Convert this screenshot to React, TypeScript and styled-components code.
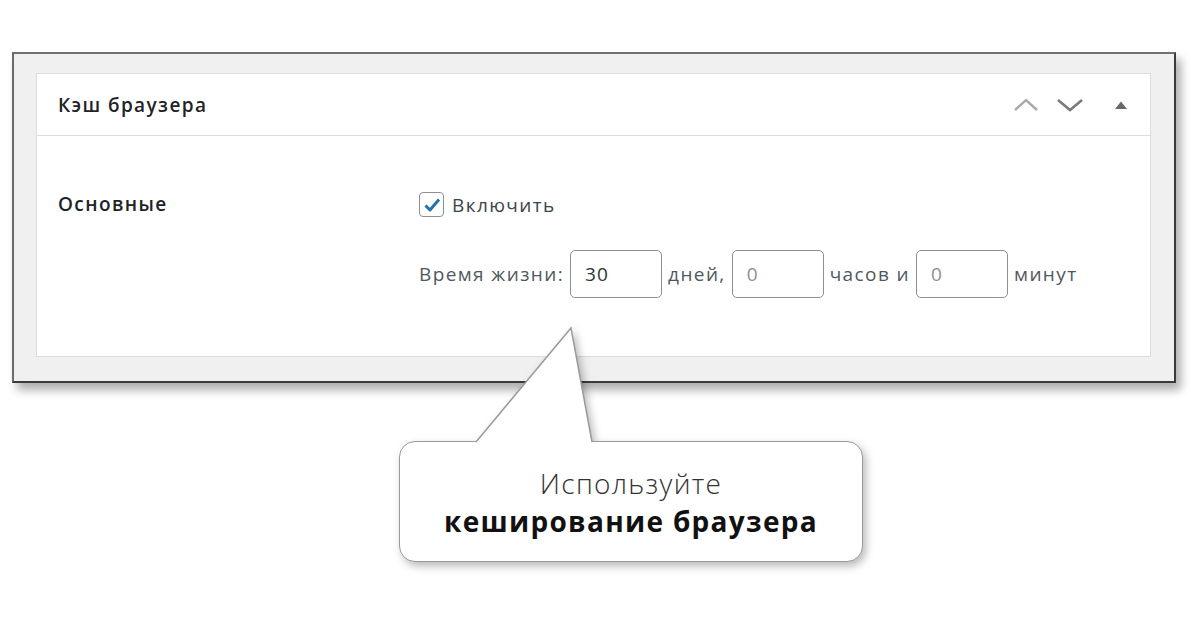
import styled, { createGlobalStyle } from "styled-components";

const GlobalStyle = createGlobalStyle`
  html, body {
    margin: 0;
    padding: 0;
    background: #ffffff;
    font-family: "Open Sans", "Noto Sans", sans-serif;
  }
`;

const Page = styled.div`
  position: relative;
  width: 1200px;
  height: 628px;
  padding: 52px 0 0 12px;
  box-sizing: border-box;
  overflow: hidden;
`;

const Frame = styled.div`
  width: 1164px;
  height: 331px;
  box-sizing: border-box;
  background: #f0f0f1;
  border: 2px solid #5a5a5a;
  border-top-color: #707070;
  border-left-color: #6a6a6a;
  border-right-color: #3a3a3a;
  border-bottom-color: #3a3a3a;
  box-shadow: 5px 7px 9px rgba(0, 0, 0, 0.32);
  padding: 19px 23px 24px 22px;
`;

const Panel = styled.div`
  height: 100%;
  box-sizing: border-box;
  background: #ffffff;
  border: 1px solid #dcdcde;
  display: flex;
  flex-direction: column;
  letter-spacing: 1.4px;
`;

const Header = styled.div`
  height: 62px;
  box-sizing: border-box;
  border-bottom: 1px solid #dcdcde;
  display: flex;
  align-items: center;
  padding: 0 9px 0 21px;
`;

const Title = styled.h2`
  margin: 0;
  font-size: 19px;
  font-weight: 600;
  color: #1d2327;
`;

const Controls = styled.div`
  margin-left: auto;
  display: flex;
  align-items: center;
  gap: 4px;
`;

const IconButton = styled.button<{ $spaced?: boolean }>`
  width: 40px;
  height: 36px;
  padding: 0;
  border: none;
  background: transparent;
  display: flex;
  align-items: center;
  justify-content: center;
  margin-left: ${(p) => (p.$spaced ? "7px" : "0")};
  cursor: pointer;
`;

const Body = styled.div`
  display: grid;
  grid-template-columns: 361px 1fr;
  padding: 56px 0 0 21px;
`;

const RowLabel = styled.div`
  font-size: 19px;
  font-weight: 600;
  color: #1d2327;
  line-height: 25px;
`;

const Fields = styled.div`
  display: flex;
  flex-direction: column;
  gap: 33px;
`;

const CheckRow = styled.label`
  display: flex;
  align-items: center;
  gap: 8px;
  height: 25px;
  font-size: 19px;
  color: #3c434a;
`;

const CheckBox = styled.span`
  width: 25px;
  height: 25px;
  box-sizing: border-box;
  border: 1.5px solid #8c8f94;
  border-radius: 4px;
  display: flex;
  align-items: center;
  justify-content: center;
  background: #fff;
`;

const TimeRow = styled.div`
  display: flex;
  align-items: center;
  gap: 6px;
  font-size: 19px;
  color: #50575e;
`;

const NumberInput = styled.input`
  width: 92px;
  height: 48px;
  box-sizing: border-box;
  border: 1.5px solid #8c8f94;
  border-radius: 5px;
  padding: 0 14px;
  font-family: inherit;
  font-size: 19px;
  letter-spacing: 1px;
  color: #2c3338;
  background: #fff;
  &::placeholder {
    color: #8c8f94;
  }
`;

const Callout = styled.div`
  position: absolute;
  left: 399px;
  top: 441px;
  width: 464px;
  height: 121px;
  filter: drop-shadow(3px 4px 4px rgba(0, 0, 0, 0.28));
`;

const Bubble = styled.div`
  width: 100%;
  height: 100%;
  box-sizing: border-box;
  background: #fff;
  border: 1.5px solid #9a9a9a;
  border-radius: 16px;
  display: flex;
  flex-direction: column;
  align-items: center;
  justify-content: center;
  text-align: center;
  line-height: 38px;
  font-size: 28px;
  letter-spacing: 1.3px;
  color: #333;
`;

const Light = styled.span`
  font-weight: 300;
`;

const Strong = styled.span`
  font-weight: 700;
  color: #111;
`;

const Pointer = styled.svg`
  position: absolute;
  left: 76px;
  top: -113px;
  overflow: visible;
`;

export default function App() {
  return (
    <>
      <GlobalStyle />
      <Page>
        <Frame>
          <Panel>
            <Header>
              <Title>Кэш браузера</Title>
              <Controls>
                <IconButton aria-label="Вверх">
                  <svg width="26" height="16" viewBox="0 0 26 16">
                    <path d="M2 13 L13 3 L24 13" fill="none" stroke="#a7aaad" strokeWidth="2.4" />
                  </svg>
                </IconButton>
                <IconButton aria-label="Вниз">
                  <svg width="26" height="16" viewBox="0 0 26 16">
                    <path d="M1 3 L13 13 L25 3" fill="none" stroke="#787c82" strokeWidth="2.6" />
                  </svg>
                </IconButton>
                <IconButton aria-label="Свернуть" $spaced>
                  <svg width="14" height="10" viewBox="0 0 14 10">
                    <path d="M1 9 L7 1.5 L13 9 Z" fill="#646970" />
                  </svg>
                </IconButton>
              </Controls>
            </Header>
            <Body>
              <RowLabel>Основные</RowLabel>
              <Fields>
                <CheckRow>
                  <CheckBox>
                    <svg width="18" height="16" viewBox="0 0 18 16">
                      <path d="M2.5 8.5 L7 13 L16 2.5" fill="none" stroke="#2271b1" strokeWidth="3" strokeLinejoin="round" />
                    </svg>
                  </CheckBox>
                  Включить
                </CheckRow>
                <TimeRow>
                  Время жизни:
                  <NumberInput defaultValue="30" />
                  дней,
                  <NumberInput placeholder="0" />
                  часов и
                  <NumberInput placeholder="0" />
                  минут
                </TimeRow>
              </Fields>
            </Body>
          </Panel>
        </Frame>
        <Callout>
          <Bubble>
            <Light>Используйте</Light>
            <Strong>кеширование браузера</Strong>
          </Bubble>
          <Pointer width="120" height="116" viewBox="0 0 120 116">
            <polygon points="1,114.5 96,0 117,114.5" fill="#fff" />
            <polyline points="1,114 96,0 117,114" fill="none" stroke="#9a9a9a" strokeWidth="1.5" />
            <rect x="2.5" y="113" width="113" height="4" fill="#fff" />
          </Pointer>
        </Callout>
      </Page>
    </>
  );
}
